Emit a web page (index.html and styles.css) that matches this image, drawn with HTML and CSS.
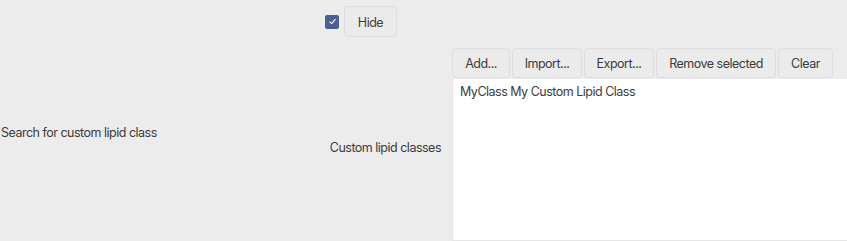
FILE: index.html
```html
<!DOCTYPE html>
<html lang="en">
<head>
    <meta charset="UTF-8">
    <title>Custom lipid classes</title>
    <link rel="stylesheet" href="styles.css">
</head>
<body>
    <div class="window">
        <div class="search-col">
            <span class="label">Search for custom lipid class</span>
        </div>
        <div class="mid-col">
            <div class="hide-row">
                <span class="check">
                    <svg width="9" height="9" viewBox="0 0 9 9"><path d="M1.8 4.8 L3.7 6.6 L7.2 2.4" fill="none" stroke="#fff" stroke-width="1.1" stroke-linecap="round" stroke-linejoin="round"/></svg>
                </span>
                <button class="btn btn-hide">Hide</button>
            </div>
            <span class="label list-label">Custom lipid classes</span>
        </div>
        <div class="list-col">
            <div class="toolbar">
                <button class="btn btn-add">Add...</button>
                <button class="btn btn-import">Import...</button>
                <button class="btn btn-export">Export...</button>
                <button class="btn btn-remove">Remove selected</button>
                <button class="btn btn-clear">Clear</button>
            </div>
            <div class="list">
                <div class="list-item">MyClass My Custom Lipid Class</div>
            </div>
        </div>
    </div>
</body>
</html>
```

FILE: styles.css
```css
html, body {
    margin: 0;
    height: 100%;
}
body {
    background: #ececec;
    font-family: Inter, "Noto Sans", sans-serif;
    font-size: 12.5px;
    letter-spacing: -0.5px;
    color: #3c3c3c;
    overflow: hidden;
}
.window {
    display: flex;
    height: 241px;
}
.search-col {
    width: 310px;
    padding-top: 125px;
    box-sizing: border-box;
}
.search-col .label {
    display: block;
    padding-left: 1px;
}
.mid-col {
    width: 142px;
    display: flex;
    flex-direction: column;
    align-items: flex-end;
}
.hide-row {
    display: flex;
    align-items: center;
    gap: 5px;
    margin-top: 6px;
    align-self: flex-start;
    margin-left: 15px;
}
.check {
    width: 14px;
    height: 14px;
    border-radius: 2px;
    background: #4a5e92;
    display: flex;
    align-items: center;
    justify-content: center;
}
.list-label {
    margin-top: 103px;
    margin-right: 11px;
}
.btn {
    font-family: inherit;
    font-size: 12.5px;
    letter-spacing: -0.5px;
    color: #3c3c3c;
    background: #ebebeb;
    border: 1px solid #dedede;
    border-radius: 4px;
    height: 30px;
    padding: 1px 0 0;
    margin: 0;
}
.btn-hide {
    width: 53px;
    height: 31px;
}
.list-col {
    flex: 1;
    display: flex;
    flex-direction: column;
}
.toolbar {
    display: flex;
    gap: 2px;
    margin-top: 48px;
    height: 30px;
}
.btn-add { width: 58px; }
.btn-import { width: 70px; }
.btn-export { width: 70px; }
.btn-remove { width: 120px; }
.btn-clear { width: 55px; }
.list {
    flex: 1;
    margin-top: 1px;
    background: #fff;
    border-left: 1px solid #e2e2e2;
    border-bottom: 1px solid #e6e6e6;
}
.list-item {
    padding: 5px 0 0 7px;
}
```
